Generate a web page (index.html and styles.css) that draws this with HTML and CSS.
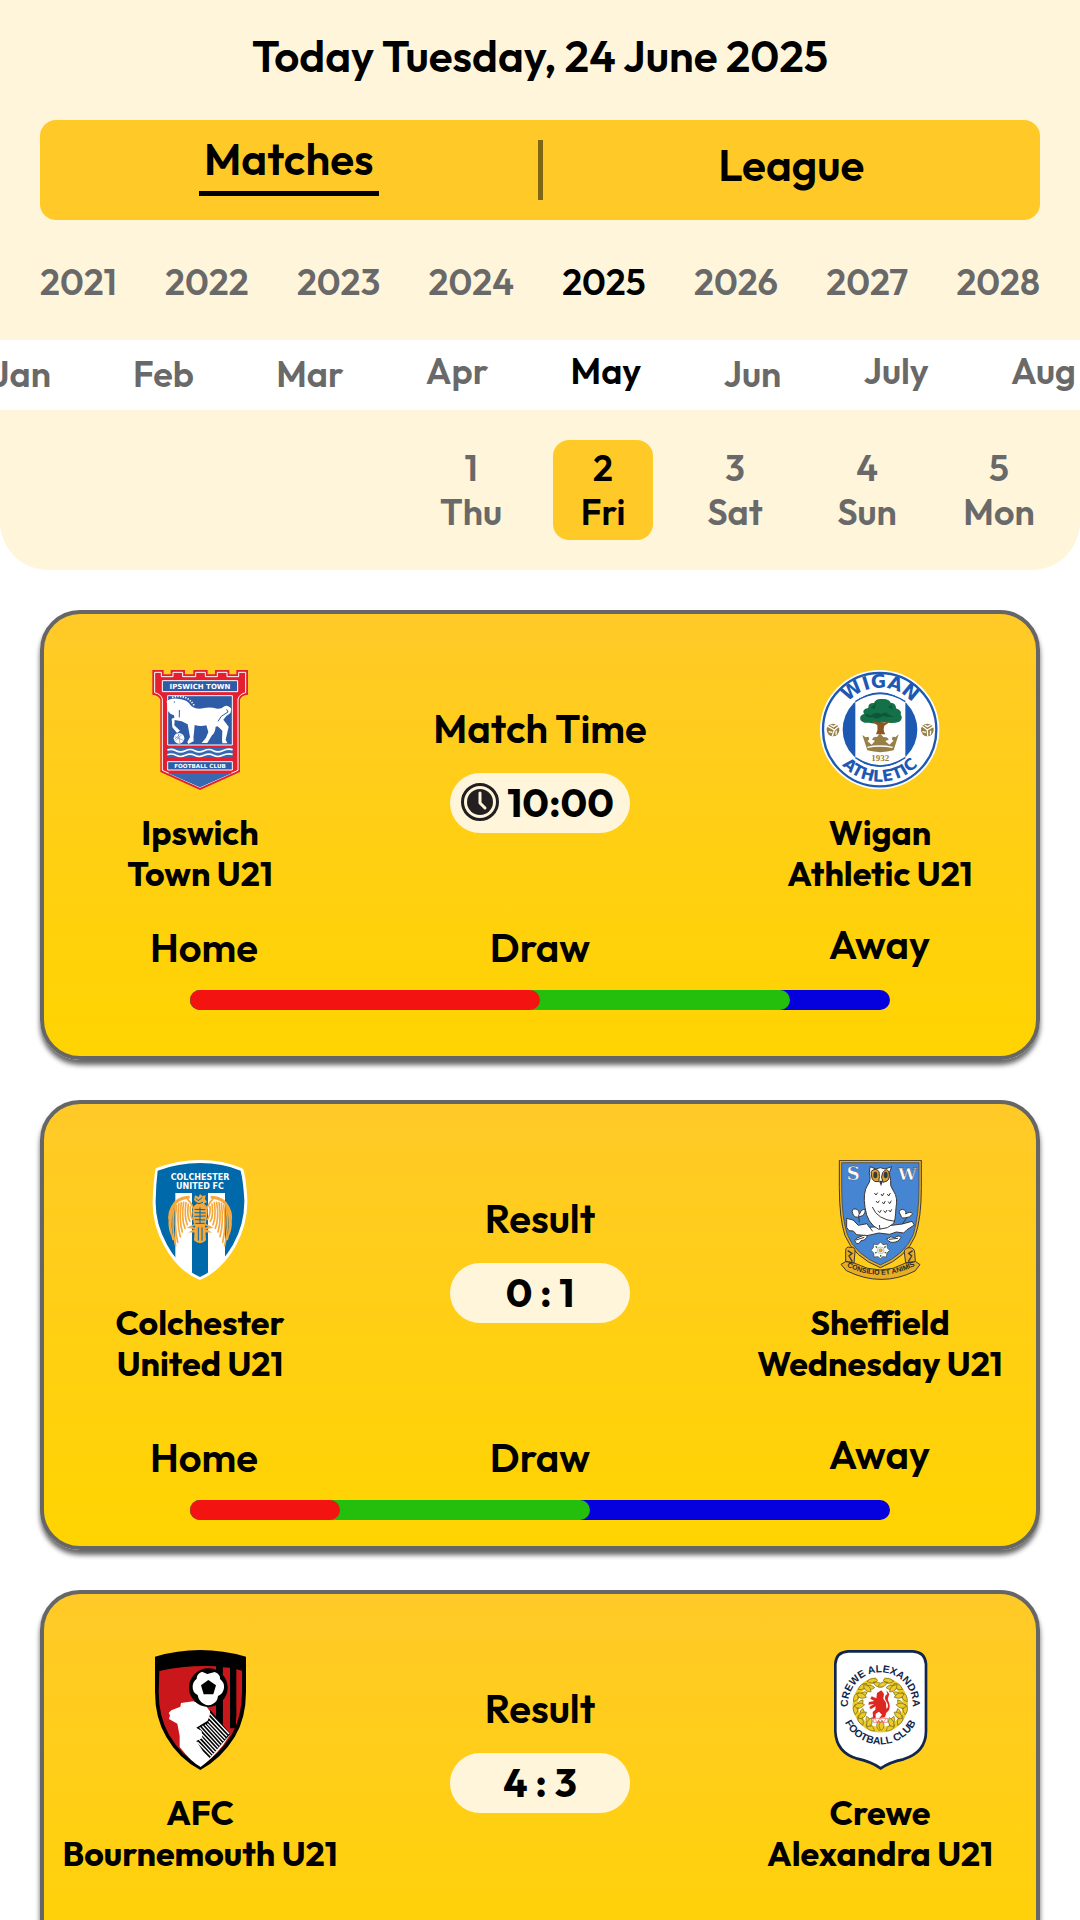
FILE: index.html
```html
<!DOCTYPE html>
<html lang="en">
<head>
<meta charset="utf-8">
<meta name="viewport" content="width=device-width, initial-scale=1">
<title>Matches</title>
<link rel="stylesheet" href="styles.css">
</head>
<body>
<div class="app">
  <header class="header">
    <h1 class="today">Today Tuesday, 24 June 2025</h1>
    <nav class="tabs">
      <a class="tab" href="#matches"><span class="tab-label tab-label-active">Matches</span></a>
      <span class="tab-divider"></span>
      <a class="tab" href="#league"><span class="tab-label">League</span></a>
    </nav>
    <div class="years">
      <button class="pick">2021</button>
      <button class="pick">2022</button>
      <button class="pick">2023</button>
      <button class="pick">2024</button>
      <button class="pick selected">2025</button>
      <button class="pick">2026</button>
      <button class="pick">2027</button>
      <button class="pick">2028</button>
    </div>
    <div class="months">
      <button class="pick">Jan</button>
      <button class="pick">Feb</button>
      <button class="pick">Mar</button>
      <button class="pick descends">Apr</button>
      <button class="pick descends selected">May</button>
      <button class="pick">Jun</button>
      <button class="pick descends">July</button>
      <button class="pick descends">Aug</button>
    </div>
    <div class="days">
      <button class="pick day day-first">1<br>Thu</button>
      <button class="pick day day-selected selected">2<br>Fri</button>
      <button class="pick day">3<br>Sat</button>
      <button class="pick day">4<br>Sun</button>
      <button class="pick day">5<br>Mon</button>
    </div>
  </header>

  <main class="matches" id="matches">
    <article class="card card-upcoming">
      <div class="teams">
        <div class="team">
          <svg class="crest" viewBox="0 30 360 360" role="img" aria-label="Ipswich Town crest">
            <path fill="#e3202f" d="M37 30h34v13h21V30h43v13h25V30h43v13h22V30h43v13h21V30h35v74q-20 2-24 15v217l-120 54-119-54V119q-5-13-24-15z"/>
            <path fill="none" stroke="#fff" stroke-width="3" d="M44 37h20v13h35V37h29v13h39V37h29v13h36V37h29v13h35V37h21v61q-18 4-23 19v214l-114 51-113-51V117q-5-15-23-19z"/>
            <path fill="#2e5ca6" stroke="#fff" stroke-width="3" d="M67 62h226v33H67zM83 107h194v148H83zM83 305h194v25H83z"/>
            <path fill="#3868b0" d="M82 263h196v29H82zM83 339h194l-97 43z"/>
            <text x="180" y="86" class="svg-label" font-size="21" fill="#fff">IPSWICH TOWN</text>
            <text x="180" y="324" class="svg-label" font-size="17" fill="#fff">FOOTBALL CLUB</text>
            <path fill="none" stroke="#fff" stroke-width="5" d="M82 270q13-5 26 2t28 0 28 0 28 0 28 0 28 0 30-3M82 284q13-5 26 2t28 0 28 0 28 0 28 0 28 0 30-3"/>
            <path fill="#fff" d="M92 117q14-3 31 1 20 3 30 19 14 12 36 8 20-5 42 1 14 1 20-6 12-8 22 5 4 14-14 23l-9 11 16 21q-5 22-9 39l5 11h-15l-1-10 1-28-14-13-6 1q-2 19-11 26l-14 23h-17l13-16 7-17-6-20q-18 4-35-1l-2 23q-3 15-1 26l-16 8-3-6 8-15-7-38-18-9-21-4-1 16 17 16-9 7-14-17-2-26 8-3-1-7-10-4-8-9-4-30z"/>
            <path fill="none" stroke="#fff" stroke-width="5" stroke-dasharray="4 4" d="M96 112q45-11 66 24"/>
            <path fill="none" stroke="#2e5ca6" stroke-width="3" d="M260 148l4 8-20 13-10 15M118 150v22M103 124v4"/>
            <circle cx="117" cy="235" r="16" fill="#fff"/><path fill="none" stroke="#3868b0" stroke-width="1.500" d="M104 230l26 11M107 242l18-18M115 221l5 29M104 238l14-14"/>
          </svg>
          <h2 class="team-name">Ipswich<br>Town U21</h2>
        </div>
        <div class="score">
          <span class="score-title">Match Time</span>
          <span class="pill pill-time">
            <svg class="clock" viewBox="0 0 38 38" aria-hidden="true"><circle cx="19" cy="19" r="17.500" fill="none" stroke="#231f20" stroke-width="3"/><circle cx="19" cy="19" r="13" fill="#231f20"/><path d="M19 10v10l5 5" fill="none" stroke="#fff5db" stroke-width="3" stroke-linecap="round" stroke-linejoin="round"/></svg>
            10:00
          </span>
        </div>
        <div class="team">
          <svg class="crest" viewBox="30 30 360 360" role="img" aria-label="Wigan Athletic crest">
            <circle cx="209" cy="209" r="179" fill="#fff"/><circle cx="209" cy="209" r="170" fill="none" stroke="#1d59b3" stroke-width="7"/>
            <circle cx="210" cy="209" r="112" fill="#1d59b3"/>
            <path fill="#fff" d="M136 125q74-48 150 0v168q-75 49-150 0z"/>
            <path fill="none" stroke="#1d59b3" stroke-width="4" d="M136 125q74-48 150 0M136 293q75 49 150 0"/>
            <path fill="#147047" d="M151 179q-3-14 11-17-8-14 13-18-1-16 17-15 5-14 24-12 20-2 26 11 17 2 16 17 19 7 14 18 8 15-4 22-18 7-43 2-32 6-48 1-20 2-26-9z"/>
            <path fill="#0c573a" d="M165 166q10-9 15 2 22-16 32-5 15-12 26 2l14 5q-21 3-32-2-22 13-33 3-13 5-22-5zM182 143q12-5 17-16l-5 20zM229 139q11 4 16-6l2 14z"/>
            <path fill="#8d5522" d="M184 183l18 13q3 14-4 27h28q-8-12-3-26l20-13-25 4-3-9-4 9z"/>
            <path fill="#978047" d="M157 225l10 7 8-2q6 9-3 13l13 11 10-12-9-3q4-11 15-8l9-11 10 11q14-1 16 8l-10 4 12 11 13-12q-8-2-3-12l9 1 9-8-15 48q-40 11-79 0z"/>
            <path fill="none" stroke="#fff" stroke-width="4" d="M172 262q37-8 76 0"/>
            <text class="svg-serif" x="211" y="303" font-size="27" fill="#978047">1932</text>
            <path id="wigan-top" d="M84 209a126 126 0 0 1 252 0" fill="none"/>
            <path id="wigan-bottom" d="M54 209a156 156 0 0 0 312 0" fill="none"/>
            <text class="svg-label" font-size="56" fill="#1d59b3"><textPath href="#wigan-top" startOffset="50%">WIGAN</textPath></text>
            <text class="svg-label" font-size="48" fill="#1d59b3"><textPath href="#wigan-bottom" startOffset="50%">ATHLETIC</textPath></text>
            <g fill="#978047"><circle cx="69" cy="210" r="19"/><circle cx="352" cy="210" r="19"/></g>
            <path fill="none" stroke="#fff" stroke-width="4" d="M54 199l19 11 14-11M73 210l-6 18M61 195l10 5 9-6M56 215l11 2M78 224l1-12M337 199l15 11 18-11M352 210l1 18M344 195l8 5 10-5M337 215l11 2M361 224l1-12"/>
          </svg>
          <h2 class="team-name">Wigan<br>Athletic U21</h2>
        </div>
      </div>
      <div class="odds">
        <div class="odds-labels"><span>Home</span><span>Draw</span><span class="descends">Away</span></div>
        <div class="odds-bar"><div class="odds-draw" style="width:85.7%"><div class="odds-home" style="width:58.3%"></div></div></div>
      </div>
    </article>

    <article class="card">
      <div class="teams">
        <div class="team">
          <svg class="crest" viewBox="0 30 360 360" role="img" aria-label="Colchester United crest">
            <path fill="#fff" d="M47 55q67-25 134-25t125 25q5 2 6 10 7 28 10 84 2 72-35 140-45 76-107 101-65-25-107-101-38-68-35-140 2-56 9-94z"/>
            <path fill="#0069aa" d="M53 62q61-23 128-23t121 23q8 33 11 89 1 70-34 133-41 71-99 97-61-27-99-97-36-65-34-133 1-49 6-89z"/>
            <path fill="#fff" d="M106 129h50v241q-28-16-50-43zM204 129h51v198q-22 28-51 43z"/>
            <text x="180" y="91" class="svg-label" font-size="24" fill="#fff">COLCHESTER</text>
            <text x="180" y="116" class="svg-label" font-size="24" fill="#fff">UNITED FC</text>
            <g id="wing" fill="none" stroke="#f5a83b" stroke-width="5" stroke-linecap="round">
              <path stroke-width="9" d="M145 142q-36 3-48 30-9 16-8 32"/>
              <path d="M143 148q10 10 14 20l8 20"/>
              <path d="M90 190q-6 36 4 62M97 180q-10 50 2 88M103 171q-10 62 4 116M110 165q-9 60 3 112M117 160q-8 56 4 100M124 158q-8 50 3 88M131 157q-8 46 4 78M138 158q-6 42 4 66M145 162q-5 36 5 52M151 170q-2 24 7 38"/>
              <path d="M168 222l-20 10 22 4-16 9 20 0"/>
            </g>
            <use href="#wing" transform="matrix(-1 0 0 1 361 0)"/>
            <path fill="#f5a83b" d="M162 168l10-8-10-10 3-14 11 5 4-9 7 6 10-2-2 12 6 8-9 5 8 8 3 16-5 34-3 8 3 44-8 6-10 3-10-3-8-6 3-44-4-8-4-34z"/>
            <path fill="none" stroke="#0069aa" stroke-width="3" d="M167 145l8 7 12-10M169 158l8 3 12-4M164 178l32 1M164 188l33 1M163 199l34-1M165 209l30 1M166 220h28M175 232v40M186 232v40M180 172v48"/>
          </svg>
          <h2 class="team-name">Colchester<br>United U21</h2>
        </div>
        <div class="score">
          <span class="score-title">Result</span>
          <span class="pill">0 : 1</span>
        </div>
        <div class="team">
          <svg class="crest" viewBox="0 30 360 360" role="img" aria-label="Sheffield Wednesday crest">
            <path fill="#e8ad20" stroke="#3a3838" stroke-width="3" d="M58 31h246v82q0 91-18 144-26 65-105 96-79-31-106-96-17-52-17-144z"/>
            <path fill="#4685d2" stroke="#3a3838" stroke-width="2" d="M65 38h232v75q0 84-17 141-25 60-99 91-75-31-99-91-17-51-17-141z"/>
            <text x="100" y="90" class="svg-roman" font-size="54" fill="#fff" stroke="#3a3838">S</text>
            <text x="262" y="89" class="svg-roman" font-size="50" fill="#fff" stroke="#3a3838">W</text>
            <g fill="#fff" stroke="#3a3838" stroke-width="3">
              <path d="M80 205l19 5 16 16 26-5 7 11 59-5 39-5 30-8 7 11-22 14-10 10-22-3-20 7-33-4-35 8-31-3-10-11-13-1-7-10z"/>
              <path d="M150 50l18 7q12-8 27 0l20-7-7 19 4 23q-4 14 9 32 13 18 7 49-2 42-8 48l-18 12-26 5q-35-17-41-66-7-45 8-67 11-13 5-37z"/>
              <path d="M98 190q-6-15 10-13 11 2 10 16 8-20 18-13-1 16-14 19-20 8-24-9zM242 195q-11-14 5-17 14 3 10 14 14-10 21 0-10 12-20 11-14 4-16-8zM107 278q-7-9 4-14l17-7q15-4 13 5-8 11-18 10-8 14-16 6zM200 267q13-11 24-4 15-10 19 0-9 14-17 13-16 5-26-9z"/>
            </g>
            <path fill="#daa12d" stroke="#3a3838" stroke-width="3" d="M153 65q13-14 24 0 3 14-1 30-13 3-20-9zM188 68q12-17 19-1 3 21-6 26l-12 4q-8-17-1-29z"/>
            <ellipse cx="166" cy="75" rx="6" ry="10" fill="#3a3838"/><ellipse cx="197" cy="75" rx="6" ry="10" fill="#3a3838"/><path d="M177 92l6 17 6-17z" fill="#3a3838"/>
            <path fill="none" stroke="#3a3838" stroke-width="3" d="M163 129l5 6 5-7M183 132l4 6 5-9M202 132l4 6 5-9M168 153l5 6 5-7M187 156l4 6 5-9M205 155l4 6 5-9M174 182l5 6 5-8M191 182l5 6 5-8M206 180l5 6 4-8M157 171q15 38 68 43M116 194l2 23M260 204l-14 19M108 270l25-8M207 268l27-3M158 244l-9-12M180 238l-2-13"/>
            <path fill="#fff" stroke="#3a3838" stroke-width="2" d="M182 276l7 8 12-2 1 12 7 7-8 8-2 12-11-1-7 6-7-6-12 1-1-12-8-8 7-8 1-11 12 2z"/>
            <circle cx="182" cy="301" r="10" fill="none" stroke="#3a3838"/><circle cx="182" cy="301" r="5" fill="#e8ad20" stroke="#3a3838"/><path stroke="#247633" stroke-width="4" d="M167 289l4 4M197 289l-4 4M165 309l5-2M199 309l-5-2M182 320v-5"/>
            <path fill="#e8ad20" stroke="#3a3838" stroke-width="3" d="M77 335V301q1-12 13-9 17-3 15 14l-3 33q81 42 155 0l-4-32q0-13 14-14 16-1 17 14l2 27 14 10-15 19q-101 51-206-1l-16-19z"/>
            <path fill="none" stroke="#3a3838" stroke-width="4" d="M83 302l13 8-9 8 10 17M278 302l-12 8 9 8-10 17M77 334l25 5M285 335l-28 4"/>
            <path id="owls-motto" d="M76 347q104 55 214-2" fill="none"/>
            <text class="svg-motto" font-size="21" fill="#292622"><textPath href="#owls-motto" startOffset="50%">CONSILIO ET ANIMIS</textPath></text>
          </svg>
          <h2 class="team-name">Sheffield<br>Wednesday U21</h2>
        </div>
      </div>
      <div class="odds">
        <div class="odds-labels"><span>Home</span><span>Draw</span><span class="descends">Away</span></div>
        <div class="odds-bar"><div class="odds-draw" style="width:57.1%"><div class="odds-home" style="width:37.5%"></div></div></div>
      </div>
    </article>

    <article class="card">
      <div class="teams">
        <div class="team">
          <svg class="crest" viewBox="0 30 360 360" role="img" aria-label="AFC Bournemouth crest">
            <path fill="#000" d="M45 50q135-40 273 0v105q0 80-34 136-40 65-103 99-65-34-102-99-34-56-34-136z"/>
            <path fill="#ca171c" d="M58 93q80-18 170-14v172h20V82l22 1v171l19-22V88l17 4v63q0 75-31 129-39 62-94 94-56-30-94-94-31-54-31-129z"/>
            <path fill="#000" d="M228 75h20v190h-20zM270 75h18v190h-18z"/>
            <path fill="#fff" d="M94 211l27-11 2-11 37-5 38 14 16 22v24l57 38-22 34q-31 39-67 65-27-14-63-60V288l-7-37-25-14 3-11-4-7z"/>
            <path fill="#000" d="M211 210l60 72-62 72-20-20-20-31 18-9-2-20-16-11 34-21 6-15z"/>
            <path fill="none" stroke="#fff" stroke-width="4" d="M209 220l58 62M207 232l54 57M206 244l50 52M202 251l49 52M195 254l51 56M187 258l53 58M179 262l56 61M174 270l56 60M184 292l40 44M177 298l42 45M172 306l42 43"/>
            <path fill="#fff" d="M168 270q20-3 15 12 5 14-11 18l-12-10z"/>
            <circle cx="205" cy="143" r="58" fill="#000"/>
            <path fill="#fff" d="M186 95l16 7 22-6q18 7 16 21 14 11 12 26-1 16-18 25-2 18-15 23-13 9-28 0-15-7-18-26-16-8-15-24 0-16 12-25 0-15 16-21z"/>
            <path fill="#000" d="M205 120l23 16-8 27h-29l-8-27z"/>
          </svg>
          <h2 class="team-name">AFC<br>Bournemouth U21</h2>
        </div>
        <div class="score">
          <span class="score-title">Result</span>
          <span class="pill">4 : 3</span>
        </div>
        <div class="team">
          <svg class="crest" viewBox="0 30 360 360" role="img" aria-label="Crewe Alexandra crest">
            <path fill="#fff" stroke="#12264c" stroke-width="8" d="M84 34h195q36 2 39 38v202q0 63-68 84-40 8-68 27-29-20-70-29-63-18-66-82V72q2-36 38-38z"/>
            <path fill="none" stroke="#eccb28" stroke-width="16" d="M170 120a75 75 0 1 0 22 0"/>
            <g id="wreath" fill="#eccb28" stroke="#776b1b" stroke-width="2">
              <g id="leaves"><path d="M178 272q-15-14-2-31 17 16 2 31zM164 273q-24 0-26-19 20-3 26 19zM152 259q-20-13-12-30 18 10 12 30z"/></g>
              <use href="#leaves" transform="rotate(28 181 194)"/>
              <use href="#leaves" transform="rotate(56 181 194)"/>
              <use href="#leaves" transform="rotate(84 181 194)"/>
              <use href="#leaves" transform="rotate(112 181 194)"/>
              <use href="#leaves" transform="rotate(138 181 194)"/>
            </g>
            <use href="#wreath" transform="matrix(-1 0 0 1 362 0)"/>
            <path fill="#dd2821" d="M171 159l13-8 8 10-2 15 8 12 1 18q7-3 4-14l-8-15q-1-12 7-14l-3-12 9 11-4 12q-3 7 4 16 5 20-9 28l-4 14-17 2 8-10-9-9-10 6v14l-12 1 4-7-1-13 8-7 1-10-15 9-4-7 14-9-17 2 2-8 16-3-12-7 4-7 14 6z"/>
            <path fill="none" stroke="#e56159" stroke-width="2" d="M160 235h43v12h-43zM163 235l9 12 8-12 10 12 9-12"/>
            <path id="crewe-top" d="M84 194a97 97 0 0 1 194 0" fill="none"/>
            <path id="crewe-bottom" d="M62 194a119 119 0 0 0 238 0" fill="none"/>
            <text class="svg-ring" font-size="31" fill="#12264c"><textPath href="#crewe-top" startOffset="50%">CREWE ALEXANDRA</textPath></text>
            <text class="svg-ring" font-size="31" fill="#12264c"><textPath href="#crewe-bottom" startOffset="50%">FOOTBALL CLUB</textPath></text>
          </svg>
          <h2 class="team-name">Crewe<br>Alexandra U21</h2>
        </div>
      </div>
    </article>
  </main>
</div>
</body>
</html>
```
FILE: styles.css
```css
* { box-sizing: border-box; }

body {
  margin: 0;
  background: #fff;
  color: #000;
  font-family: Outfit, Lato, "Liberation Sans", sans-serif;
  font-weight: 600;
}

.app {
  height: 100vh;
  overflow: hidden;
}

/* Date picker header */
.header {
  background: #fff5db;
  border-radius: 0 0 48px 48px;
  padding: 31px 0 30px;
}

.today {
  margin: 0 0 39px;
  font-size: 44px;
  line-height: 50px;
  font-weight: 600;
  text-align: center;
}

.tabs {
  display: grid;
  grid-template-columns: 1fr 5px 1fr;
  align-items: center;
  height: 100px;
  margin: 0 40px;
  background: #ffca28;
  border-radius: 16px;
}

.tab {
  display: flex;
  justify-content: center;
  padding-bottom: 10px;
  color: inherit;
  text-decoration: none;
  font-size: 44px;
  line-height: 50px;
}

.tab-label-active {
  width: 180px;
  padding-bottom: 7px;
  border-bottom: 5px solid #000;
  text-align: center;
}

.tab-divider {
  height: 60px;
  background: #7f6514;
}

.pick {
  padding: 0;
  border: 0;
  background: none;
  color: #696969;
  font: inherit;
  font-size: 36px;
  line-height: 44px;
}

.selected { color: #000; }

.years {
  display: flex;
  justify-content: space-between;
  padding: 40px 40px 36px;
}

.months {
  display: flex;
  justify-content: space-between;
  align-items: center;
  height: 70px;
  margin-bottom: 30px;
  padding: 0 4px 2px 0;
  background: #fff;
  overflow: hidden;
}

.months .pick:first-child { margin-left: -9px; }

.pick.descends,
.descends { padding-bottom: 6px; }

.days {
  display: grid;
  grid-template-columns: repeat(8, 1fr);
  justify-items: center;
  padding: 0 15px 0 9px;
}

.day {
  width: 100px;
  height: 100px;
  border-radius: 16px;
}

.day-first { grid-column-start: 4; }

.day-selected { background: #ffca28; }

/* Match cards */
.matches {
  display: flex;
  flex-direction: column;
  gap: 40px;
  padding: 40px;
}

.card {
  display: flex;
  flex-direction: column;
  justify-content: space-between;
  min-height: 450px;
  padding: 56px 0 26px;
  border: 4px solid #666;
  border-radius: 40px;
  background: linear-gradient(#ffca28, #ffd400);
  box-shadow: 0 5px 5px rgba(0, 0, 0, 0.6);
}

.card-upcoming { padding-bottom: 46px; }

.teams {
  display: grid;
  grid-template-columns: 1fr 368px 1fr;
  justify-items: center;
}

.team {
  display: flex;
  flex-direction: column;
  align-items: center;
  gap: 22px;
}

.crest {
  width: 120px;
  height: 120px;
}

.team-name {
  margin: 0;
  font-size: 34px;
  line-height: 41px;
  font-weight: 700;
  text-align: center;
  white-space: nowrap;
}

.score {
  display: flex;
  flex-direction: column;
  align-items: center;
  gap: 20px;
  padding-top: 33px;
}

.score-title {
  font-size: 40px;
  line-height: 50px;
}

.pill {
  display: flex;
  align-items: center;
  justify-content: center;
  gap: 8px;
  width: 180px;
  height: 60px;
  padding-bottom: 2px;
  border-radius: 30px;
  background: #fff5db;
  font-size: 40px;
  font-weight: 700;
}

.pill-time { padding-right: 5px; }

.clock {
  width: 38px;
  height: 38px;
}

.odds-labels {
  display: grid;
  grid-template-columns: 1fr auto 1fr;
  align-items: center;
  margin-bottom: 15px;
  padding: 0 106px;
  font-size: 40px;
  line-height: 50px;
}

.odds-labels span:last-child { justify-self: end; }

.odds-bar {
  display: flex;
  height: 20px;
  margin: 0 146px;
  border-radius: 10px;
  background: #0400de;
  overflow: hidden;
}

.odds-draw {
  border-radius: 0 10px 10px 0;
  background: #24bf0c;
}

.odds-home {
  height: 20px;
  border-radius: 0 10px 10px 0;
  background: #f31411;
}

/* Lettering inside the club crests */
.svg-label,
.svg-ring,
.svg-serif,
.svg-roman,
.svg-motto { text-anchor: middle; font-weight: 700; }

.svg-label { font-family: "DejaVu Sans", sans-serif; }
.svg-ring { font-family: "Liberation Sans", sans-serif; }
.svg-serif { font-family: "Liberation Serif", serif; }
.svg-roman { font-family: "DejaVu Serif", serif; }
.svg-motto { font-family: "Liberation Sans", sans-serif; }
```
